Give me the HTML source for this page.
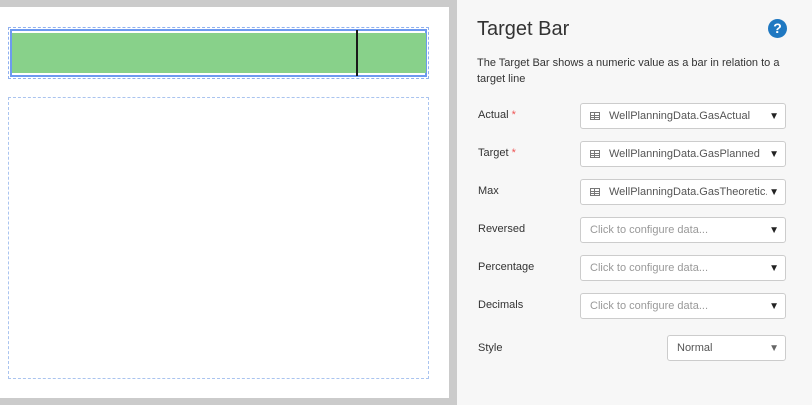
<!DOCTYPE html>
<html><head><style>
body{margin:0;width:812px;height:405px;background:#cbcbcb;font-family:"Liberation Sans",sans-serif;position:relative;overflow:hidden}
.a{position:absolute}
.lbl{position:absolute;left:478px;font-size:11px;color:#333}
.req{color:#e55}
.dd{position:absolute;left:580px;width:204px;height:24px;border:1px solid #ccc;border-radius:3px;background:#fff;font-size:11px;color:#555;line-height:25px;box-sizing:content-box;overflow:hidden}
.dd span.t{position:absolute;left:28px;white-space:nowrap}
.dd span.p{position:absolute;left:9px;color:#999}
.dd .ar{position:absolute;right:6px;top:1px;height:22px;line-height:23px;font-size:10px;color:#222}
.ic{position:absolute;left:9px;top:8px;width:10px;height:8px;border:1px solid #777;box-sizing:border-box;background:linear-gradient(#777,#777) 0 2px/100% 1px no-repeat,linear-gradient(#777,#777) 0 4px/100% 1px no-repeat,linear-gradient(#777,#777) 3px 0/1px 100% no-repeat}
</style></head><body>
<div class="a" style="left:0;top:7px;width:449px;height:391px;background:#fff"></div>
<div class="a" style="left:8px;top:27px;width:419px;height:50px;border:1px dashed #8fb0ef"></div>
<div class="a" style="left:10px;top:29px;border:2px solid #6d9af0;width:413px;height:44px"></div>
<div class="a" style="left:12px;top:33px;width:414px;height:40px;background:#88d18a"></div>
<div class="a" style="left:356px;top:30px;width:2px;height:46px;background:#1a1a1a"></div>
<div class="a" style="left:8px;top:97px;width:419px;height:280px;border:1px dashed #aac4ef"></div>
<div class="a" style="left:457px;top:0;width:355px;height:405px;background:#f7f7f7"></div>
<div class="a" style="left:477px;top:18px;font-size:20px;color:#333">Target Bar</div>
<div class="a" style="left:768px;top:19px;width:19px;height:19px;border-radius:50%;background:#1f78c1;color:#fff;font-weight:bold;font-size:14px;text-align:center;line-height:19px">?</div>
<div class="a" style="left:477px;top:55px;width:320px;font-size:11px;line-height:16px;color:#333">The Target Bar shows a numeric value as a bar in relation to a target line</div>
<div class="lbl" style="top:109px">Actual <span class="req">*</span></div>
<div class="lbl" style="top:147px">Target <span class="req">*</span></div>
<div class="lbl" style="top:185px">Max</div>
<div class="lbl" style="top:223px">Reversed</div>
<div class="lbl" style="top:261px">Percentage</div>
<div class="lbl" style="top:299px">Decimals</div>
<div class="lbl" style="top:342px">Style</div>
<div class="dd" style="top:103px"><div class="ic"></div><span class="t">WellPlanningData.GasActual</span><span class="ar">▼</span></div>
<div class="dd" style="top:141px"><div class="ic"></div><span class="t">WellPlanningData.GasPlanned</span><span class="ar">▼</span></div>
<div class="dd" style="top:179px"><div class="ic"></div><span class="t">WellPlanningData.GasTheoretic...</span><span class="ar" style="background:#fff;padding-left:2px">▼</span></div>
<div class="dd" style="top:217px"><span class="p">Click to configure data...</span><span class="ar">▼</span></div>
<div class="dd" style="top:255px"><span class="p">Click to configure data...</span><span class="ar">▼</span></div>
<div class="dd" style="top:293px"><span class="p">Click to configure data...</span><span class="ar">▼</span></div>
<div class="dd" style="top:335px;left:667px;width:117px"><span class="p" style="color:#555">Normal</span><span class="ar" style="color:#666">▼</span></div>
</body></html>
